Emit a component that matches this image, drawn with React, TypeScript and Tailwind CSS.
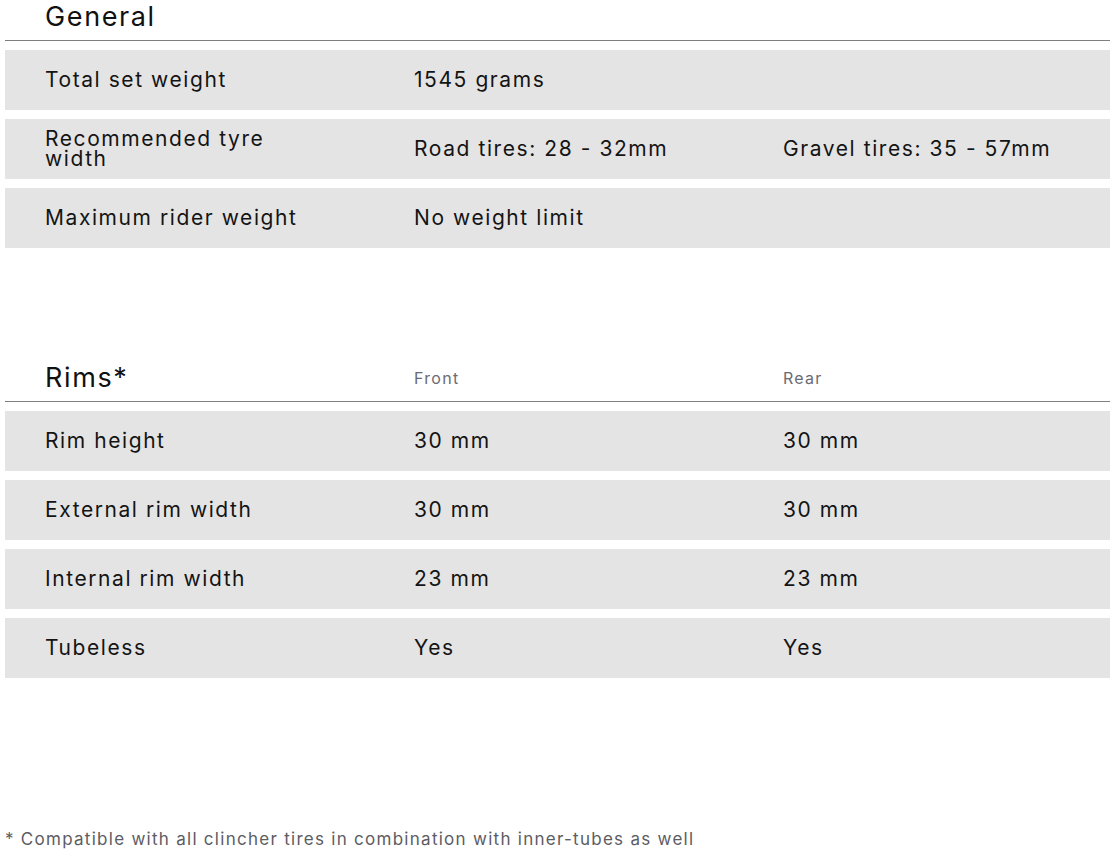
const general = [
  { label: "Total set weight", values: ["1545 grams"] },
  { label: "Recommended tyre width", values: ["Road tires: 28 - 32mm", "Gravel tires: 35 - 57mm"] },
  { label: "Maximum rider weight", values: ["No weight limit"] },
];

const rims = [
  { label: "Rim height", values: ["30 mm", "30 mm"] },
  { label: "External rim width", values: ["30 mm", "30 mm"] },
  { label: "Internal rim width", values: ["23 mm", "23 mm"] },
  { label: "Tubeless", values: ["Yes", "Yes"] },
];

function SpecRow({ label, values }: { label: string; values: string[] }) {
  return (
    <div className="grid h-[60px] grid-cols-[369px_369px_1fr] items-center bg-[#e4e4e4] pl-10 text-[21px] tracking-[0.075em] text-[#141414]">
      <div className="w-[280px] leading-[20px]">{label}</div>
      {values.map((v) => (
        <div key={v + label}>{v}</div>
      ))}
    </div>
  );
}

function SectionHeader({ title, cols }: { title: string; cols?: string[] }) {
  return (
    <div className="grid h-[41px] grid-cols-[369px_369px_1fr] items-end border-b border-[#7f7f7f] pb-[6px] pl-10">
      <div className="text-[27px] leading-[34px] tracking-[0.06em] text-[#111]">{title}</div>
      {cols?.map((c) => (
        <div key={c} className="mb-[7px] text-[16px] leading-[20px] tracking-[0.08em] text-[#6b6b73]">
          {c}
        </div>
      ))}
    </div>
  );
}

export default function App() {
  return (
    <div className="h-[858px] w-[1116px] bg-white px-[5px] font-['Inter',sans-serif]">
      <div className="w-[1105px]">
        <SectionHeader title="General" />
        <div className="mt-[9px] flex flex-col gap-[9px]">
          {general.map((r) => (
            <SpecRow key={r.label} {...r} />
          ))}
        </div>

        <div className="mt-[113px]">
          <SectionHeader title="Rims*" cols={["Front", "Rear"]} />
        </div>
        <div className="mt-[9px] flex flex-col gap-[9px]">
          {rims.map((r) => (
            <SpecRow key={r.label} {...r} />
          ))}
        </div>

        <p className="mt-[149px] text-[17px] leading-[24px] tracking-[0.075em] text-[#5c5c63]">
          * Compatible with all clincher tires in combination with inner-tubes as well
        </p>
      </div>
    </div>
  );
}
